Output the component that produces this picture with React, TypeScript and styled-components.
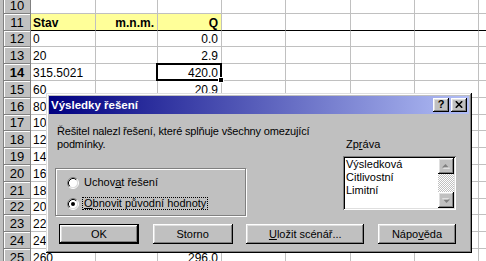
import React from 'react';
import styled, { createGlobalStyle, css } from 'styled-components';

const GlobalStyle = createGlobalStyle`
  html, body { margin: 0; padding: 0; background: #c0c0c0; overflow: hidden; }
  body { width: 486px; height: 261px; font-family: "Liberation Sans", Arial, sans-serif; }
`;

const COLS = [65, 62, 64, 64, 65, 64, 64, 64];

type RowData = { n: number; a?: string; b?: string; c?: string; head?: boolean; active?: boolean };

const ROWS: RowData[] = [
  { n: 10 },
  { n: 11, a: 'Stav', b: 'm.n.m.', c: 'Q', head: true },
  { n: 12, a: '0', c: '0.0' },
  { n: 13, a: '20', c: '2.9' },
  { n: 14, a: '315.5021', c: '420.0', active: true },
  { n: 15, a: '60', c: '20.9' },
  { n: 16, a: '80' },
  { n: 17, a: '100' },
  { n: 18, a: '120' },
  { n: 19, a: '140' },
  { n: 20, a: '160' },
  { n: 21, a: '180' },
  { n: 22, a: '200' },
  { n: 23, a: '220' },
  { n: 24, a: '240' },
  { n: 25, a: '260', c: '296.0' },
];

const Screen = styled.div`
  position: relative;
  width: 486px;
  height: 261px;
  overflow: hidden;
  background: #c0c0c0;
`;

const Sheet = styled.div`
  display: grid;
  grid-template-columns: 28px ${COLS.map((c) => `${c}px`).join(' ')};
  grid-auto-rows: 16.8px;
  padding-left: 3px;
  margin-top: -3px;
`;

const RowHeader = styled.div<{ $active?: boolean }>`
  box-sizing: border-box;
  background: #c0c0c0;
  border-left: 1px solid #808080;
  border-right: 1px solid #808080;
  border-bottom: 1px solid #808080;
  box-shadow: inset 1px 1px #ffffff;
  display: flex;
  align-items: center;
  justify-content: center;
  font-family: "Liberation Sans", Arial, sans-serif;
  font-size: 13px;
  line-height: 1;
  font-weight: ${(p) => (p.$active ? 700 : 400)};
  color: #000;
  padding-top: 1px;
`;

const Cell = styled.div<{ $right?: boolean; $bold?: boolean; $yellow?: boolean; $freeze?: boolean; $active?: boolean }>`
  position: relative;
  box-sizing: border-box;
  background: ${(p) => (p.$yellow ? '#ffff99' : '#ffffff')};
  border-right: 1px solid #c0c0c0;
  border-bottom: 1px solid ${(p) => (p.$freeze ? '#000000' : '#c0c0c0')};
  display: flex;
  align-items: flex-end;
  justify-content: ${(p) => (p.$right ? 'flex-end' : 'flex-start')};
  padding: 0 3px 0 2px;
  font-family: "Liberation Sans", Arial, sans-serif;
  font-size: 12px;
  line-height: 14px;
  font-weight: ${(p) => (p.$bold ? 700 : 400)};
  color: #000;
  white-space: nowrap;
  ${(p) =>
    p.$active &&
    css`
      &::after {
        content: '';
        position: absolute;
        top: -1px;
        left: -2px;
        right: -1px;
        bottom: -1px;
        border: 2px solid #000;
      }
      &::before {
        content: '';
        position: absolute;
        right: -3px;
        bottom: -3px;
        width: 4px;
        height: 4px;
        background: #000;
        border: 1px solid #fff;
        z-index: 1;
      }
    `}
`;

/* ---------- Dialog ---------- */

const raised = css`
  box-shadow: inset -1px -1px #000000, inset 1px 1px #ffffff, inset -2px -2px #808080, inset 2px 2px #dfdfdf;
`;

const Dialog = styled.div`
  position: absolute;
  left: 46px;
  top: 93px;
  width: 426px;
  height: 160px;
  box-sizing: border-box;
  background: #c0c0c0;
  padding: 3px;
  box-shadow: inset -1px -1px #000000, inset 1px 1px #dfdfdf, inset -2px -2px #808080, inset 2px 2px #ffffff;
  display: flex;
  flex-direction: column;
  font-family: "Liberation Sans", Arial, sans-serif;
  font-size: 11px;
  color: #000;
`;

const TitleBar = styled.div`
  height: 18px;
  display: flex;
  align-items: center;
  padding: 0 2px 0 2px;
  background: linear-gradient(to right, #000080, #b2bef6);
`;

const TitleText = styled.div`
  flex: 1;
  color: #fff;
  font-weight: 700;
  font-size: 11.5px;
  line-height: 14px;
`;

const TitleButtons = styled.div`
  display: flex;
  gap: 2px;
`;

const TitleButton = styled.div`
  width: 16px;
  height: 14px;
  box-sizing: border-box;
  background: #c0c0c0;
  ${raised};
  display: flex;
  align-items: center;
  justify-content: center;
  font-weight: 700;
  font-size: 11px;
  line-height: 1;
  padding-bottom: 1px;
`;

const Body = styled.div`
  flex: 1;
  display: flex;
  flex-direction: column;
  padding: 11px 13px 0 6px;
`;

const TopArea = styled.div`
  display: grid;
  grid-template-columns: 1fr 113px;
`;

const LeftCol = styled.div`
  display: flex;
  flex-direction: column;
`;

const Message = styled.p`
  margin: 0;
  padding-left: 2px;
  line-height: 13px;
  letter-spacing: -0.16px;
  white-space: nowrap;
`;

const GroupBox = styled.div`
  margin-top: 17px;
  width: 191px;
  box-sizing: border-box;
  border: 1px solid #808080;
  box-shadow: inset 1px 1px #ffffff, 1px 1px #ffffff;
  padding: 7px 0 5px 11px;
  display: flex;
  flex-direction: column;
  gap: 8px;
`;

const RadioRow = styled.div`
  display: flex;
  align-items: center;
  height: 13px;
  gap: 3px;
`;

const RadioLabel = styled.span<{ $focused?: boolean }>`
  border: 1px dotted ${(p) => (p.$focused ? '#000' : 'transparent')};
  padding: 0 1px;
  line-height: 11px;
  white-space: nowrap;
`;

const Key = styled.span`
  text-decoration: underline;
  text-underline-offset: 1px;
`;

const RightCol = styled.div`
  display: flex;
  flex-direction: column;
  padding-top: 13px;
`;

const FieldLabel = styled.div`
  line-height: 13px;
  padding-left: 3px;
`;

const ListBox = styled.div`
  margin-top: 5px;
  width: 113px;
  height: 54px;
  box-sizing: border-box;
  background: #fff;
  padding: 2px;
  box-shadow: inset 1px 1px #808080, inset -1px -1px #ffffff, inset 2px 2px #000000, inset -2px -2px #dfdfdf;
  display: flex;
`;

const ListItems = styled.div`
  flex: 1;
  padding-left: 1px;
  display: flex;
  flex-direction: column;
`;

const ListItem = styled.div`
  line-height: 13px;
  white-space: nowrap;
`;

const ScrollBar = styled.div`
  width: 16px;
  display: flex;
  flex-direction: column;
`;

const ScrollButton = styled.div`
  width: 16px;
  height: 16px;
  box-sizing: border-box;
  background: #c0c0c0;
  ${raised};
  display: flex;
  align-items: center;
  justify-content: center;
`;

const ScrollTrack = styled.div`
  flex: 1;
  background: repeating-conic-gradient(#c0c0c0 0% 25%, #ffffff 0% 50%) 0 0 / 2px 2px;
`;

const ButtonRow = styled.div`
  margin-top: 8px;
  padding-left: 4px;
  display: flex;
  justify-content: space-between;
`;

const Button = styled.div<{ $w: number; $default?: boolean }>`
  width: ${(p) => p.$w}px;
  height: 20px;
  box-sizing: border-box;
  background: #c0c0c0;
  display: flex;
  align-items: center;
  justify-content: center;
  line-height: 13px;
  white-space: nowrap;
  ${(p) =>
    p.$default
      ? css`
          box-shadow: inset -2px -2px #000000, inset 1px 1px #000000, inset 2px 2px #ffffff, inset -3px -3px #808080,
            inset 3px 3px #dfdfdf;
        `
      : raised}
`;

const Radio: React.FC<{ checked?: boolean }> = ({ checked }) => (
  <svg width="12" height="12" viewBox="0 0 12 12">
    <circle cx="6" cy="6" r="4.5" fill="#fff" />
    <path d="M2.11 9.89A5.5 5.5 0 0 1 9.89 2.11" fill="none" stroke="#808080" strokeWidth="1" />
    <path d="M9.89 2.11A5.5 5.5 0 0 1 2.11 9.89" fill="none" stroke="#ffffff" strokeWidth="1" />
    <path d="M2.82 9.18A4.5 4.5 0 0 1 9.18 2.82" fill="none" stroke="#000000" strokeWidth="1" />
    <path d="M9.18 2.82A4.5 4.5 0 0 1 2.82 9.18" fill="none" stroke="#dfdfdf" strokeWidth="1" />
    {checked && <circle cx="6" cy="6" r="2" fill="#000" />}
  </svg>
);

const Arrow: React.FC<{ down?: boolean }> = ({ down }) => (
  <svg width="8" height="5" viewBox="0 0 8 5">
    <g transform={down ? 'rotate(180 4 2.5)' : undefined}>
      <path d="M4.5 1L8 4.5H1z" fill="#ffffff" />
      <path d="M3.5 0L7 3.5H0z" fill="#808080" />
    </g>
  </svg>
);

const CloseGlyph = () => (
  <svg width="8" height="7" viewBox="0 0 8 7">
    <path d="M0.8 0.3L7.2 6.7M7.2 0.3L0.8 6.7" stroke="#000" strokeWidth="1.6" fill="none" />
  </svg>
);

export default function App() {
  return (
    <>
      <GlobalStyle />
      <Screen>
        <Sheet>
          {ROWS.map((r) => (
            <React.Fragment key={r.n}>
              <RowHeader $active={r.active}>{r.n}</RowHeader>
              <Cell $bold={r.head} $yellow={r.head} $freeze={r.head}>
                {r.a}
              </Cell>
              <Cell $right $bold={r.head} $yellow={r.head} $freeze={r.head}>
                {r.b}
              </Cell>
              <Cell $right $bold={r.head} $yellow={r.head} $freeze={r.head} $active={r.active}>
                {r.c}
              </Cell>
              {COLS.slice(3).map((_, i) => (
                <Cell key={i} $freeze={r.head} />
              ))}
            </React.Fragment>
          ))}
        </Sheet>

        <Dialog>
          <TitleBar>
            <TitleText>Výsledky řešení</TitleText>
            <TitleButtons>
              <TitleButton>?</TitleButton>
              <TitleButton>
                <CloseGlyph />
              </TitleButton>
            </TitleButtons>
          </TitleBar>
          <Body>
            <TopArea>
              <LeftCol>
                <Message>
                  Řešitel nalezl řešení, které splňuje všechny omezující
                  <br />
                  podmínky.
                </Message>
                <GroupBox>
                  <RadioRow>
                    <Radio />
                    <RadioLabel>
                      Uchov<Key>a</Key>t řešení
                    </RadioLabel>
                  </RadioRow>
                  <RadioRow>
                    <Radio checked />
                    <RadioLabel $focused>
                      <Key>O</Key>bnovit původní hodnoty
                    </RadioLabel>
                  </RadioRow>
                </GroupBox>
              </LeftCol>
              <RightCol>
                <FieldLabel>
                  Zp<Key>r</Key>áva
                </FieldLabel>
                <ListBox>
                  <ListItems>
                    <ListItem>Výsledková</ListItem>
                    <ListItem>Citlivostní</ListItem>
                    <ListItem>Limitní</ListItem>
                  </ListItems>
                  <ScrollBar>
                    <ScrollButton>
                      <Arrow />
                    </ScrollButton>
                    <ScrollTrack />
                    <ScrollButton>
                      <Arrow down />
                    </ScrollButton>
                  </ScrollBar>
                </ListBox>
              </RightCol>
            </TopArea>
            <ButtonRow>
              <Button $w={80} $default>
                OK
              </Button>
              <Button $w={80}>Storno</Button>
              <Button $w={118}>
                <Key>U</Key>ložit scénář...
              </Button>
              <Button $w={78}>
                Nápo<Key>v</Key>ěda
              </Button>
            </ButtonRow>
          </Body>
        </Dialog>
      </Screen>
    </>
  );
}
